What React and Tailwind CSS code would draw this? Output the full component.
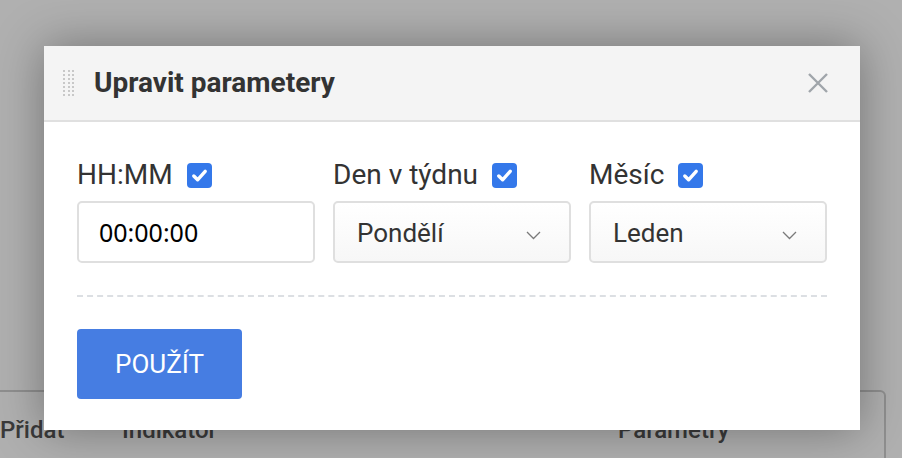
import React, { useState } from 'react';

const font = { fontFamily: 'Roboto, "Noto Sans", sans-serif' };

const dny = ['Pondělí', 'Úterý', 'Středa', 'Čtvrtek', 'Pátek', 'Sobota', 'Neděle'];
const mesice = ['Leden', 'Únor', 'Březen', 'Duben', 'Květen', 'Červen', 'Červenec', 'Srpen', 'Září', 'Říjen', 'Listopad', 'Prosinec'];

function Zaskrtavatko({ checked, onChange }) {
  return (
    <button
      type="button"
      onClick={onChange}
      className={`w-[25px] h-[25px] rounded-[4px] flex items-center justify-center ${checked ? 'bg-[#3478ea]' : 'bg-white border-2 border-[#ccc]'}`}
    >
      {checked && (
        <svg width="17" height="17" viewBox="0 0 17 17" fill="none">
          <path d="M2.8 9l3.8 3.8L14.2 4.3" stroke="white" strokeWidth="3.4" strokeLinecap="round" strokeLinejoin="round" />
        </svg>
      )}
    </button>
  );
}

function Vyber({ value, options, onChange }) {
  return (
    <div className="relative h-[62px] rounded-[5px] border-2 border-[#dfdfdf] bg-[linear-gradient(#ffffff,#f7f7f7)]">
      <select
        value={value}
        onChange={(e) => onChange(e.target.value)}
        className="appearance-none w-full h-full bg-transparent pl-[22px] pr-10 pt-[3px] text-[26px] text-[#333] outline-none"
        style={font}
      >
        {options.map(o => <option key={o}>{o}</option>)}
      </select>
      <svg className="absolute right-[28px] top-[28px] pointer-events-none" width="15" height="9" viewBox="0 0 15 9" fill="none">
        <path d="M1 1l6.5 6.5L14 1" stroke="#7a7a7a" strokeWidth="1.3" />
      </svg>
    </div>
  );
}

function Pole({ label, checked, onToggle, children }) {
  return (
    <div className="flex flex-col gap-[10px]">
      <div className="flex items-center gap-[14px] h-[32px]">
        <span className="text-[28px] text-[#333] leading-none">{label}</span>
        <Zaskrtavatko checked={checked} onChange={onToggle} />
      </div>
      {children}
    </div>
  );
}

export default function App() {
  const [cas, setCas] = useState('00:00:00');
  const [den, setDen] = useState('Pondělí');
  const [mesic, setMesic] = useState('Leden');
  const [zapnuto, setZapnuto] = useState({ cas: true, den: true, mesic: true });

  const prepni = (klic) => setZapnuto(prev => ({ ...prev, [klic]: !prev[klic] }));

  return (
    <div className="relative w-full h-[458px] overflow-hidden bg-white" style={font}>
      {/* stránka pod dialogem */}
      <div className="pt-[390px]">
        <div className="ml-[-12px] w-[898px] h-[120px] border-2 border-[#cfcfcf] rounded-tr-[6px] pt-[20px] pl-[10px]">
          <div className="grid grid-cols-[104px_478px_240px] gap-x-[18px] gap-y-[10px]">
            <span className="text-[24px] font-medium text-[#555]">Přidat</span>
            <span className="text-[24px] font-medium text-[#555]">Indikátor</span>
            <span className="text-[24px] font-medium text-[#555]">Parametry</span>
            <div className="h-[40px] border-2 border-[#d0d0d0] rounded-[5px]" />
            <div className="h-[40px] border-2 border-[#d0d0d0] rounded-[5px]" />
            <div className="h-[40px] border-2 border-[#d0d0d0] rounded-[5px]" />
          </div>
        </div>
      </div>

      {/* překrytí */}
      <div className="absolute inset-0 bg-black/[0.31] flex justify-center items-start pt-[46px] pl-[2px]">
        <div className="w-[816px] bg-white shadow-[0_0_45px_rgba(0,0,0,0.35)]">
          <div className="h-[76px] bg-[#f4f4f4] border-b-2 border-[#e0e0e0] flex items-center pl-[19px] pr-[32px]">
            <div className="grid grid-cols-3 gap-x-[2.5px] gap-y-[2px] mr-[20px]">
              {Array.from({ length: 21 }).map((_, i) => (
                <span key={i} className="w-[2px] h-[2px] bg-[#c8c8c8]" />
              ))}
            </div>
            <h2 className="text-[28px] font-bold text-[#333] flex-grow">Upravit parametery</h2>
            <button type="button" className="w-[20px] h-[20px]">
              <svg width="20" height="20" viewBox="0 0 20 20" fill="none">
                <path d="M1 1l18 18M19 1L1 19" stroke="#a0a5aa" strokeWidth="2.4" />
              </svg>
            </button>
          </div>

          <div className="px-[33px] pt-[37px] pb-[31px]">
            <div className="grid grid-cols-3 gap-[18px]">
              <Pole label="HH:MM" checked={zapnuto.cas} onToggle={() => prepni('cas')}>
                <input
                  value={cas}
                  onChange={(e) => setCas(e.target.value)}
                  className="h-[62px] rounded-[5px] border-2 border-[#dfdfdf] pl-[20px] text-[25px] text-black outline-none"
                  style={{ fontFamily: '"Noto Sans", Roboto, sans-serif' }}
                />
              </Pole>
              <Pole label="Den v týdnu" checked={zapnuto.den} onToggle={() => prepni('den')}>
                <Vyber value={den} options={dny} onChange={setDen} />
              </Pole>
              <Pole label="Měsíc" checked={zapnuto.mesic} onToggle={() => prepni('mesic')}>
                <Vyber value={mesic} options={mesice} onChange={setMesic} />
              </Pole>
            </div>

            <div className="mt-[32px] border-t-2 border-dashed border-[#dcdfe3]" />

            <button
              type="button"
              className="mt-[32px] w-[165px] h-[70px] rounded-[4px] bg-[#467de2] text-white text-[26px] uppercase"
            >
              Použít
            </button>
          </div>
        </div>
      </div>
    </div>
  );
}
